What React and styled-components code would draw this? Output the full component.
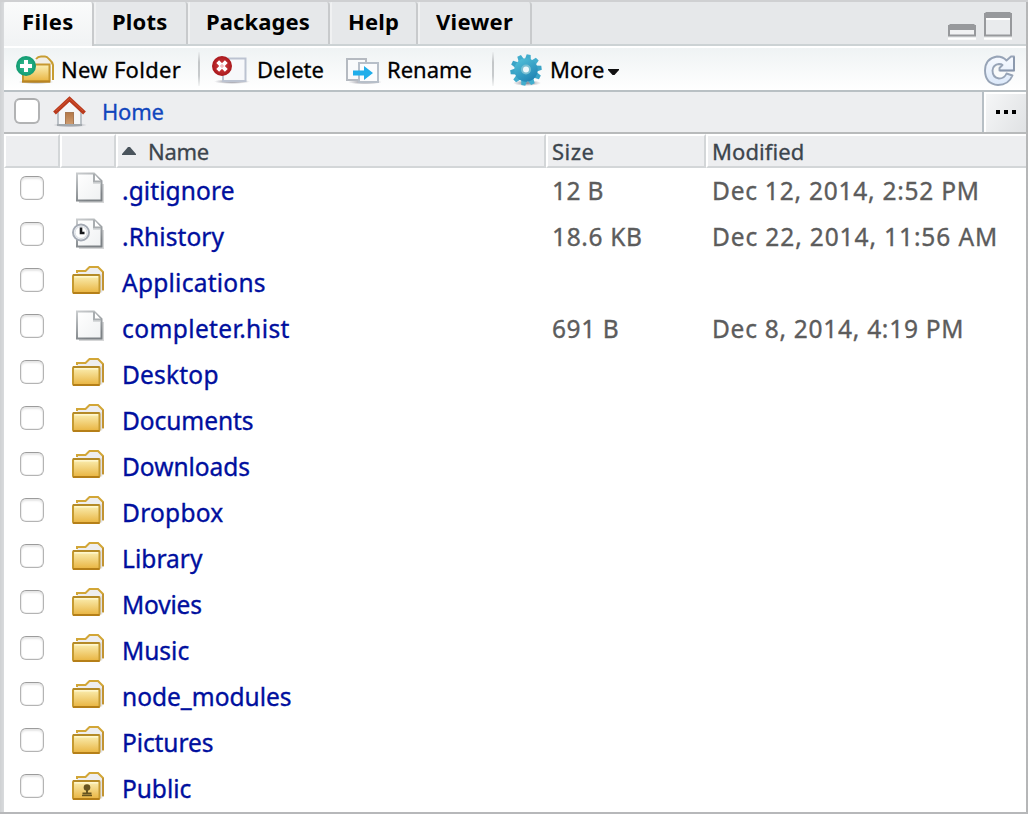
import React from "react";
import styled, { createGlobalStyle } from "styled-components";

const GlobalStyle = createGlobalStyle`
  *, *::before, *::after { box-sizing: border-box; }
  body { margin: 0; background: #d6d8da; font-family: "Noto Sans", "Open Sans", sans-serif; }
`;

const Frame = styled.div`
  width: 1028px;
  height: 814px;
  padding: 2px 2px 2px 4px;
  background: linear-gradient(90deg, #cfd1d3 0, #d9dbdd 4px, #b9babb 1024px, #b4b5b6 100%);
  box-shadow: inset 0 2px 0 #cfd0d2, inset 0 -2px 0 #b7b8ba;
  overflow: hidden;
`;
const Panel = styled.main`
  height: 810px;
  display: flex;
  flex-direction: column;
  background: #fff;
`;
const TabBar = styled.nav`
  flex: none;
  height: 44px;
  display: flex;
  background: #e6e8ea;
  border-bottom: 2px solid #ccd2d4;
`;
const Tab = styled.div`
  width: ${(p) => p.$w}px;
  height: ${(p) => (p.$active ? 44 : 42)}px;
  padding-left: ${(p) => p.$pad}px;
  border-right: 2px solid #c8cacc;
  border-left: ${(p) => (p.$active ? "0" : "2px solid #f0f1f2")};
  border-radius: 2px 3px 0 0;
  background: ${(p) => (p.$active ? "linear-gradient(#fafbfb, #f1f3f4)" : "#e6e8ea")};
  color: #000;
  font-size: 22px;
  font-weight: 700;
  line-height: 38px;
  letter-spacing: ${(p) => p.$ls || 0}px;
  white-space: nowrap;
`;
const WindowButtons = styled.div`
  margin-left: auto;
  padding: 10px 13px 0 0;
`;
const ToolBar = styled.div`
  flex: none;
  height: 46px;
  display: flex;
  align-items: center;
  border-top: 2px solid #fff;
  border-bottom: 2px solid #b9c0c4;
  background: linear-gradient(#eff3f4, #fff);
`;
const Tool = styled.button`
  width: ${(p) => p.$w}px;
  height: 42px;
  display: flex;
  align-items: center;
  padding: 0 0 0 ${(p) => p.$pad}px;
  border: 0;
  background: none;
  color: #000;
  font: 400 22px/42px "Noto Sans", sans-serif;
  letter-spacing: ${(p) => p.$ls || 0}px;
  white-space: nowrap;
  -webkit-text-stroke: 0.3px currentColor;
  svg { flex: none; margin: 3px ${(p) => p.$gap}px 0 0; }
  svg + span + svg { margin: 5px 0 0 4px; }
`;
const Separator = styled.i`
  width: 2px;
  height: 34px;
  background: linear-gradient(#eceff0, #c3c6c8 30%, #c8cbcd 70%, #f5f6f6);
`;
const Refresh = styled.div`
  margin-left: auto;
  padding: 3px 10px 0 0;
  height: 34px;
`;
const PathBar = styled.div`
  flex: none;
  height: 42px;
  display: flex;
  align-items: center;
  padding-left: 10px;
  border-bottom: 2px solid #b8babb;
  background: #edeef0;
  svg { margin: 0 0 0 13px; }
`;
const HomeLink = styled.a`
  margin: -2px 0 0 15px;
  color: #1146bd;
  font-size: 22px;
  line-height: 38px;
  letter-spacing: ${(p) => p.$ls}px;
  -webkit-text-stroke: 0.3px currentColor;
`;
const Browse = styled.button`
  width: 44px;
  height: 40px;
  margin-left: auto;
  display: flex;
  align-items: center;
  justify-content: center;
  gap: 4px;
  padding: 0 0 0 1px;
  border: 0;
  border-left: 2px solid #b7bfc5;
  background: linear-gradient(120deg, #f6f7f8, #e0e2e4);
  box-shadow: inset 2px 2px 0 #fff;
`;
const Dot = styled.i`
  width: 4px;
  height: 4px;
  background: #000;
`;
const Checkbox = styled.span`
  display: block;
  flex: none;
  width: ${(p) => (p.$large ? 26 : 24)}px;
  height: ${(p) => (p.$large ? 26 : 24)}px;
  margin-top: ${(p) => (p.$large ? -2 : 0)}px;
  border: ${(p) => (p.$large ? "2px solid #b2b3b4" : "1.5px solid #b4b4b4")};
  border-top-color: ${(p) => (p.$large ? "#acadae" : "#9c9c9c")};
  border-radius: 6px;
  background: #fff;
  box-shadow: ${(p) => (p.$large ? "none" : "inset 0 2px 2px #e6e6e6, inset 0 0 0 1px #f0f0f0")};
`;
const columns = "56px 56px 430px 160px 1fr";
const HeaderRow = styled.div`
  flex: none;
  height: 34px;
  display: grid;
  grid-template-columns: ${columns};
`;
const HeaderCell = styled.div`
  display: flex;
  align-items: center;
  padding-left: ${(p) => p.$pad || 0}px;
  border: solid;
  border-width: 2px ${(p) => (p.$last ? 0 : 2)}px 2px 2px;
  border-color: #fff #d3d6d8 #d3d6d8 #fff;
  background: #edeef0;
  color: #3c454d;
  font-size: 22px;
  line-height: 30px;
  letter-spacing: ${(p) => p.$ls || 0}px;
  -webkit-text-stroke: 0.3px currentColor;
  svg { margin-right: 12px; }
`;
const Row = styled.div`
  flex: none;
  height: 46px;
  display: grid;
  grid-template-columns: ${columns};
`;
const CheckCell = styled.div`padding: 8px 0 0 16px;`;
const IconCell = styled.div`
  padding: 4px 0 0 12px;
  svg { display: block; }
`;
const Name = styled.a`
  padding-left: 6px;
  color: #000f9e;
  font-size: 24.5px;
  line-height: 46px;
  letter-spacing: ${(p) => p.$ls}px;
  white-space: nowrap;
  -webkit-text-stroke: 0.35px currentColor;
`;
const Detail = styled.span`
  padding-left: 6px;
  color: #5c5c5c;
  font-size: 24.5px;
  line-height: 46px;
  letter-spacing: ${(p) => p.$ls || 0}px;
  white-space: nowrap;
  -webkit-text-stroke: 0.35px currentColor;
`;

const Defs = () => (
  <svg width="0" height="0" style={{ display: "block" }}>
    <defs>
      <linearGradient id="gold" x2="0" y2="1"><stop stopColor="#fbf0b5" /><stop offset="1" stopColor="#e9b440" /></linearGradient>
      <linearGradient id="paper" x2="1" y2="1"><stop stopColor="#fff" /><stop offset="1" stopColor="#eff1f2" /></linearGradient>
      <linearGradient id="edge" x2="0.4" y2="1"><stop stopColor="#c9ccce" /><stop offset="1" stopColor="#7d8286" /></linearGradient>
      <linearGradient id="teal" x2="0.6" y2="1"><stop stopColor="#55c5dc" /><stop offset="1" stopColor="#2386b5" /></linearGradient>
      <radialGradient id="green"><stop stopColor="#3bc39a" /><stop offset="1" stopColor="#119a70" /></radialGradient>
      <radialGradient id="red"><stop stopColor="#d54548" /><stop offset="1" stopColor="#a9171b" /></radialGradient>
      <linearGradient id="wood" x2="0" y2="1"><stop stopColor="#b37746" /><stop offset="1" stopColor="#cf9e73" /></linearGradient>
      <linearGradient id="ice" x2="0" y2="1"><stop stopColor="#f7faff" /><stop offset="1" stopColor="#dce9fa" /></linearGradient>
      <radialGradient id="shade"><stop stopColor="#556" stopOpacity="0.75" /><stop offset="1" stopColor="#556" stopOpacity="0" /></radialGradient>
    </defs>
  </svg>
);

const FolderShape = () => (
  <>
    <path d="M5 10V7H14L18 3H27L31 8V27L27 29H6Z" fill="#eeeef0" />
    <path d="M5 9V7H13.5L17.5 3H26L31 8V26.5" fill="none" stroke="#d2a637" strokeWidth="2" />
    <path d="M29.2 10V28.5" stroke="#e0e1e5" strokeWidth="2" />
    <path d="M31 8V26" stroke="#c29433" strokeWidth="2" />
    <rect x="1" y="11" width="26.5" height="18" rx="1" fill="url(#gold)" stroke="#c59a30" strokeWidth="2" />
    <path d="M1 11H27.5" stroke="#b48a27" strokeWidth="2" />
    <path d="M2.5 12.8H26" stroke="#fff8d0" strokeWidth="1.4" />
    <path d="M1 29H27.5" stroke="#b57f18" strokeWidth="2" />
  </>
);
const FolderIcon = ({ shared }) => (
  <svg width="32" height="32" viewBox="0 0 32 32">
    <FolderShape />
    {shared && (
      <g fill="#665420"><circle cx="15" cy="17.5" r="3.3" /><path d="M14 20H16V22.5H19.5V24.5H10.5V22.5H14Z" /><path d="M10 25.5H20" stroke="#665420" strokeWidth="1.4" /></g>
    )}
  </svg>
);
const PageShape = () => (
  <>
    <path d="M31 12V30H7" fill="none" stroke="#b9bbbd" strokeWidth="2" opacity="0.6" />
    <path d="M5 1.5H22L29.5 9V28.5H5Z" fill="url(#paper)" stroke="url(#edge)" strokeWidth="2" />
    <path d="M22 2V9.5H29" fill="#fff" stroke="#a9adb0" strokeWidth="2" />
    <path d="M21 11H28" stroke="#c5c8ca" strokeWidth="1.2" />
  </>
);
const PageIcon = ({ clock }) => (
  <svg width="34" height="34" viewBox="0 0 34 34">
    <PageShape />
    {clock && (
      <g>
        <circle cx="9" cy="14.5" r="8" fill="#f7f9fc" stroke="#a4aab4" strokeWidth="2" />
        <circle cx="9" cy="14.5" r="6" fill="#fff" stroke="#d6dae0" strokeWidth="1" />
        <path d="M9 9.5V15H12.5" fill="none" stroke="#17191d" strokeWidth="2.6" />
      </g>
    )}
  </svg>
);
const NewFolderIcon = () => (
  <svg width="38" height="32" viewBox="0 0 38 32">
    <ellipse cx="20" cy="27" rx="18" ry="2" fill="url(#shade)" />
    <path d="M18 7L22 2H29L35 7V24H18Z" fill="#f1eee6" />
    <path d="M20 4Q22 1.5 25 1.5H29Q31 1.5 33 4Q36.5 7 37 10V25" fill="none" stroke="#c89d32" strokeWidth="2" />
    <path d="M34 11V26" stroke="#e4e1da" strokeWidth="2" />
    <rect x="7" y="9.5" width="26.5" height="17" fill="url(#gold)" stroke="#c79830" strokeWidth="2" />
    <path d="M6 26.5H34" stroke="#b98423" strokeWidth="2" />
    <circle cx="10" cy="11" r="10" fill="url(#green)" />
    <path d="M10 5V17M4 11H16" stroke="#fff" strokeWidth="4" />
  </svg>
);
const DeleteIcon = () => (
  <svg width="38" height="32" viewBox="0 0 38 32">
    <ellipse cx="20" cy="26.5" rx="18" ry="2.5" fill="url(#shade)" />
    <rect x="11" y="3.5" width="22.5" height="22.5" fill="#f7f8fa" stroke="#bcc3d1" strokeWidth="2" />
    <circle cx="10" cy="11" r="10" fill="url(#red)" />
    <path d="M5.7 6.7L14.3 15.3M14.3 6.7L5.7 15.3" stroke="#fff" strokeWidth="4" />
    <path d="M10 8.7L12.3 11L10 13.3L7.7 11Z" fill="#f4bcc0" />
  </svg>
);
const RenameIcon = () => (
  <svg width="36" height="32" viewBox="0 0 36 32">
    <ellipse cx="19" cy="27" rx="17" ry="2.5" fill="url(#shade)" />
    <rect x="1" y="4" width="19" height="21" fill="#f9fafb" stroke="#b5bac1" strokeWidth="2" />
    <rect x="13" y="8" width="19" height="19" fill="#fbfcfd" stroke="#b7bfc9" strokeWidth="2" />
    <path d="M7 15.5H18V11L27 18L18 25V20.5H7Z" fill="#20aeea" />
  </svg>
);
const GearIcon = () => (
  <svg width="34" height="34" viewBox="0 0 34 34">
    <ellipse cx="17" cy="29" rx="14" ry="3" fill="url(#shade)" />
    <g fill="url(#teal)">
      {[0, 36, 72, 108, 144].map((angle) => (
        <path key={angle} d="M14 0.3H18L19.3 7V25L18 31.7H14L12.7 25V7Z" fill={angle > 40 && angle < 120 ? "#3ba4c7" : "#42adcd"} transform={`rotate(${angle + 10} 16 16)`} />
      ))}
      <circle cx="16" cy="16" r="11.7" />
    </g>
    <circle cx="16" cy="15.5" r="4" fill="#eff8fb" stroke="#79bfd2" strokeWidth="2" />
  </svg>
);
const HomeIcon = () => (
  <svg width="34" height="32" viewBox="0 0 34 32">
    <ellipse cx="17" cy="29" rx="17" ry="2.5" fill="url(#shade)" />
    <path d="M5 15L16.5 4L28 15V29H5Z" fill="#f5f6f7" stroke="#b6bcc2" strokeWidth="1.8" />
    <rect x="12.5" y="16.5" width="8" height="12.5" fill="url(#wood)" stroke="#a77853" />
    <path d="M1.5 17L16.5 3L31.5 17" fill="none" stroke="#b93a1d" strokeWidth="4" />
    <path d="M3 15L16.5 2.5L30 15" fill="none" stroke="#d4522f" strokeWidth="1" />
    <path d="M4 29H29" stroke="#a2a8ad" strokeWidth="2" />
  </svg>
);
const RefreshIcon = () => (
  <svg width="32" height="32" viewBox="0 0 32 32">
    <path d="M22.5 5.5Q19 1.5 13 1.5Q1.2 3.5 1 15.5Q1.2 29 14 30Q24.5 30 28.5 20.5L22.5 18.5Q20.5 23.5 15 23.5Q8.5 22.5 8.5 15.5Q9 9.5 15 9Q17.5 9 18.5 10L15.5 13V15.5H30V1.5H27Z" fill="url(#ice)" stroke="#97a4b7" strokeWidth="1.9" strokeLinejoin="round" />
    <path d="M16 15.5H30V2" fill="none" stroke="#8795ab" strokeWidth="1.5" />
  </svg>
);
const Caret = () => <svg width="11" height="6" viewBox="0 0 11 6"><path d="M0 0H11V1L6.5 6H4.5L0 1Z" fill="#111" /></svg>;
const SortIcon = () => <svg width="14" height="8" viewBox="0 0 14 8"><path d="M0 8V7L6 0H8L14 7V8Z" fill="#4a545c" /></svg>;
const PaneIcons = () => (
  <svg width="65" height="28" viewBox="0 0 65 28">
    <path d="M0 26.8H28M36 26.8H64" stroke="#fff" strokeWidth="2" />
    <rect x="1" y="14" width="26" height="9.5" fill="#f1f2f3" stroke="#97999c" strokeWidth="2" />
    <path d="M0 18V14L2 12H26L28 14V18Z" fill="#97999c" />
    <rect x="37" y="2" width="26" height="21.5" fill="#e9ebed" stroke="#97999c" strokeWidth="2" />
    <path d="M36 6V2L38 0H62L64 2V6Z" fill="#97999c" />
    <path d="M38 7H62" stroke="#fff" strokeWidth="2" />
  </svg>
);

const files = [
  { name: ".gitignore", kind: "page", size: "12 B", sizeLs: 0.4, modified: "Dec 12, 2014, 2:52 PM", dateLs: 0.76, ls: 0.1 },
  { name: ".Rhistory", kind: "history", size: "18.6 KB", sizeLs: 0.65, modified: "Dec 22, 2014, 11:56 AM", dateLs: 0.88, ls: 0.1 },
  { name: "Applications", ls: 0.25 },
  { name: "completer.hist", kind: "page", size: "691 B", sizeLs: 0.6, modified: "Dec 8, 2014, 4:19 PM", dateLs: 0.72, ls: 0.4 },
  { name: "Desktop", ls: 0.2 },
  { name: "Documents", ls: -0.07 },
  { name: "Downloads", ls: -0.03 },
  { name: "Dropbox", ls: 0.25 },
  { name: "Library", ls: 0.05 },
  { name: "Movies", ls: -0.2 },
  { name: "Music", ls: 0 },
  { name: "node_modules", ls: 0 },
  { name: "Pictures", ls: -0.1 },
  { name: "Public", kind: "shared", ls: -0.05 },
];

const FileIcon = ({ kind }) =>
  kind === "page" || kind === "history" ? <PageIcon clock={kind === "history"} /> : <FolderIcon shared={kind === "shared"} />;

export default function App() {
  return (
    <Frame>
      <GlobalStyle />
      <Defs />
      <Panel>
        <TabBar>
          <Tab $active $w={90} $pad={18} $ls={0.5}>Files</Tab>
          <Tab $w={94} $pad={16} $ls={0.2}>Plots</Tab>
          <Tab $w={142} $pad={16} $ls={0.1}>Packages</Tab>
          <Tab $w={88} $pad={16} $ls={0.2}>Help</Tab>
          <Tab $w={114} $pad={16} $ls={0.3}>Viewer</Tab>
          <WindowButtons><PaneIcons /></WindowButtons>
        </TabBar>
        <ToolBar>
          <Tool $w={194} $pad={12} $gap={7} $ls={0.3}><NewFolderIcon /><span>New Folder</span></Tool>
          <Separator />
          <Tool $w={134} $pad={12} $gap={7}><DeleteIcon /><span>Delete</span></Tool>
          <Tool $w={158} $pad={12} $gap={5}><RenameIcon /><span>Rename</span></Tool>
          <Separator />
          <Tool $w={140} $pad={16} $gap={6}><GearIcon /><span>More</span><Caret /></Tool>
          <Refresh><RefreshIcon /></Refresh>
        </ToolBar>
        <PathBar>
          <Checkbox $large />
          <HomeIcon />
          <HomeLink $ls={-0.2}>Home</HomeLink>
          <Browse><Dot /><Dot /><Dot /></Browse>
        </PathBar>
        <HeaderRow>
          <HeaderCell />
          <HeaderCell />
          <HeaderCell $pad={4} $ls={-0.3}><SortIcon />Name</HeaderCell>
          <HeaderCell $pad={4} $ls={0.5}>Size</HeaderCell>
          <HeaderCell $pad={4} $ls={0.1} $last>Modified</HeaderCell>
        </HeaderRow>
        {files.map((file) => (
          <Row key={file.name}>
            <CheckCell><Checkbox /></CheckCell>
            <IconCell><FileIcon kind={file.kind} /></IconCell>
            <Name $ls={file.ls}>{file.name}</Name>
            <Detail $ls={file.sizeLs}>{file.size}</Detail>
            <Detail $ls={file.dateLs}>{file.modified}</Detail>
          </Row>
        ))}
      </Panel>
    </Frame>
  );
}
